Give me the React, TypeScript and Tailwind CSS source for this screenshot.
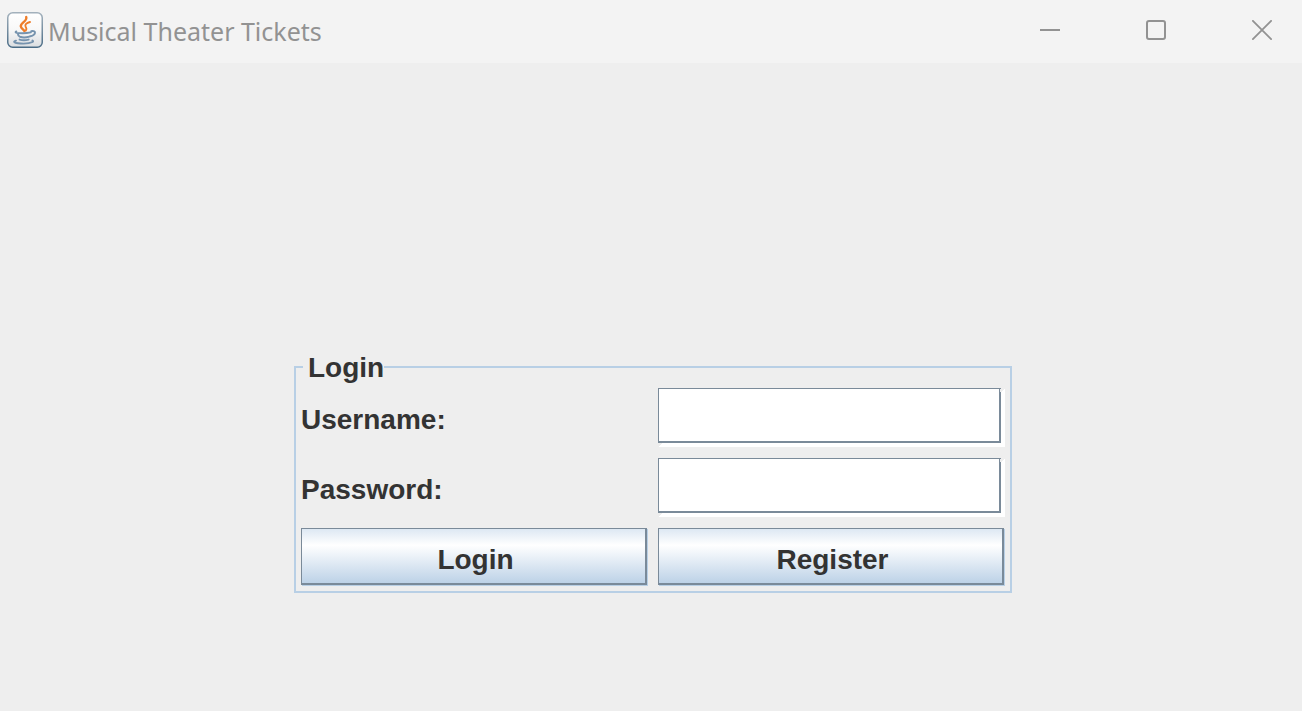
import React from "react";

function JavaIcon() {
  return (
    <svg width="36" height="36" viewBox="0 0 36 36" aria-hidden="true" className="shrink-0">
      <defs>
        <linearGradient id="tile" x1="0" y1="0" x2="0" y2="1">
          <stop offset="0" stopColor="#ffffff" />
          <stop offset="0.5" stopColor="#f8f8f8" />
          <stop offset="1" stopColor="#dadde0" />
        </linearGradient>
        <linearGradient id="edge" x1="0" y1="0" x2="0" y2="1">
          <stop offset="0" stopColor="#a3b1bc" />
          <stop offset="1" stopColor="#4a6c86" />
        </linearGradient>
      </defs>
      <rect x="0.75" y="0.75" width="34.5" height="34.5" rx="5" fill="url(#tile)" stroke="url(#edge)" strokeWidth="1.5" />
      <g fill="none" strokeLinecap="round" strokeLinejoin="round">
        <path d="M19.200 5C20.800 9 13.400 10.800 13.800 14.400c.2 2 2.400 3 3.600 4.600" stroke="#ee7d2a" strokeWidth="2.400" />
        <path d="M23 10c-3.600 1-5.400 2.600-4.400 4.600.7 1.300 1.600 2.300.2 4" stroke="#ee7d2a" strokeWidth="1.900" />
        <g stroke="#7693ae">
          <path d="M9.400 19.400c-1.800.9-.6 1.500 2 1.700 4 .3 8.800.1 12.400-.7" strokeWidth="1.800" />
          <path d="M11 22c0 1.600.8 2.400 2 2.800 2.600.8 6.600.6 9.400-.2" strokeWidth="2" />
          <path d="M12.600 27.600c2.800.8 6.200.7 9 0" strokeWidth="2" />
          <path d="M24.200 19.200c5.600-1.200 4.800 3.800-.8 5" strokeWidth="1.900" />
          <path d="M9 28.600c-3.400 1-1.800 2.300 2 2.700 5.400.5 11.600.2 14.600-1.300.8-.5.6-1-.2-1.400" strokeWidth="1.900" />
        </g>
      </g>
    </svg>
  );
}

function WindowControls() {
  return (
    <div className="flex gap-[26px] self-stretch text-[#929292]">
      <button type="button" aria-label="Minimize" className="flex w-20 items-center justify-center pb-1">
        <svg width="20" height="20" viewBox="0 0 20 20" aria-hidden="true">
          <rect y="9" width="20" height="2" fill="currentColor" />
        </svg>
      </button>
      <button type="button" aria-label="Maximize" className="flex w-20 items-center justify-center pb-1">
        <svg width="20" height="20" viewBox="0 0 20 20" fill="none" stroke="currentColor" strokeWidth="2" aria-hidden="true">
          <rect x="1" y="1" width="18" height="18" rx="2" />
        </svg>
      </button>
      <button type="button" aria-label="Close" className="flex w-20 items-center justify-center pb-1">
        <svg width="20" height="20" viewBox="0 0 20 20" stroke="currentColor" strokeWidth="1.800" aria-hidden="true">
          <path d="M0.300 0.300l19.400 19.400M19.700 0.300L0.300 19.700" />
        </svg>
      </button>
    </div>
  );
}

function Field({ id, label, type }: { id: string; label: string; type: string }) {
  return (
    <>
      <label htmlFor={id} className="self-center pt-[5px]">
        {label}
      </label>
      <div className="relative flex bg-white pr-1 pb-1">
        <input
          id={id}
          type={type}
          className="h-[55px] w-full min-w-0 border-t border-r-2 border-b-2 border-l border-[#7a8a99] bg-white px-1 outline-none"
        />
        <svg width="5" height="4" viewBox="0 0 5 4" aria-hidden="true" className="absolute top-0 right-0">
          <path d="M1 0h4v1H4v1H3v1H2v1H0V1h1z" fill="#eeeeee" />
        </svg>
        <svg width="4" height="5" viewBox="0 0 4 5" aria-hidden="true" className="absolute bottom-0 left-0">
          <path d="M0 1h4v1H3v1H2v1H1v1H0z" fill="#eeeeee" />
        </svg>
      </div>
    </>
  );
}

function MetalButton({ children }: { children: React.ReactNode }) {
  return (
    <button
      type="button"
      className="mr-px mb-px h-[57px] border-t border-r-2 border-b-2 border-l border-[#7a8a99] bg-linear-to-b from-[#dde8f3] via-white via-30% to-[#bdd2e7] pt-2 pl-1 shadow-[1px_1px_0_#b8cfe5]"
    >
      {children}
    </button>
  );
}

export default function App() {
  return (
    <div className="flex min-h-screen flex-col bg-[#eeeeee]">
      <header className="flex h-[63px] items-center justify-between bg-[#f3f3f3] pl-[7px]">
        <div className="flex items-center gap-[5px] pb-1">
          <JavaIcon />
          <h1 className="pt-0.5 font-['Noto_Sans','Open_Sans',sans-serif] text-[25px] leading-8 whitespace-nowrap text-[#929292]">
            Musical Theater Tickets
          </h1>
        </div>
        <WindowControls />
      </header>
      <main className="flex flex-1 items-start justify-center pt-72 pl-1 font-['Liberation_Sans',Arial,sans-serif] text-[28px] leading-8 font-bold text-[#333333]">
        <form className="w-full max-w-[718px]" onSubmit={(e) => e.preventDefault()}>
          <fieldset className="border-2 border-[#b8cfe5] px-[5px] pt-[5px] pb-[5px]">
            <legend className="ml-0.5 pt-0.5 pl-[5px] leading-[30px]">Login</legend>
            <div className="grid grid-cols-2 gap-x-[10px] gap-y-[11px]">
              <Field id="username" label="Username:" type="text" />
              <Field id="password" label="Password:" type="password" />
              <MetalButton>Login</MetalButton>
              <MetalButton>Register</MetalButton>
            </div>
          </fieldset>
        </form>
      </main>
    </div>
  );
}
